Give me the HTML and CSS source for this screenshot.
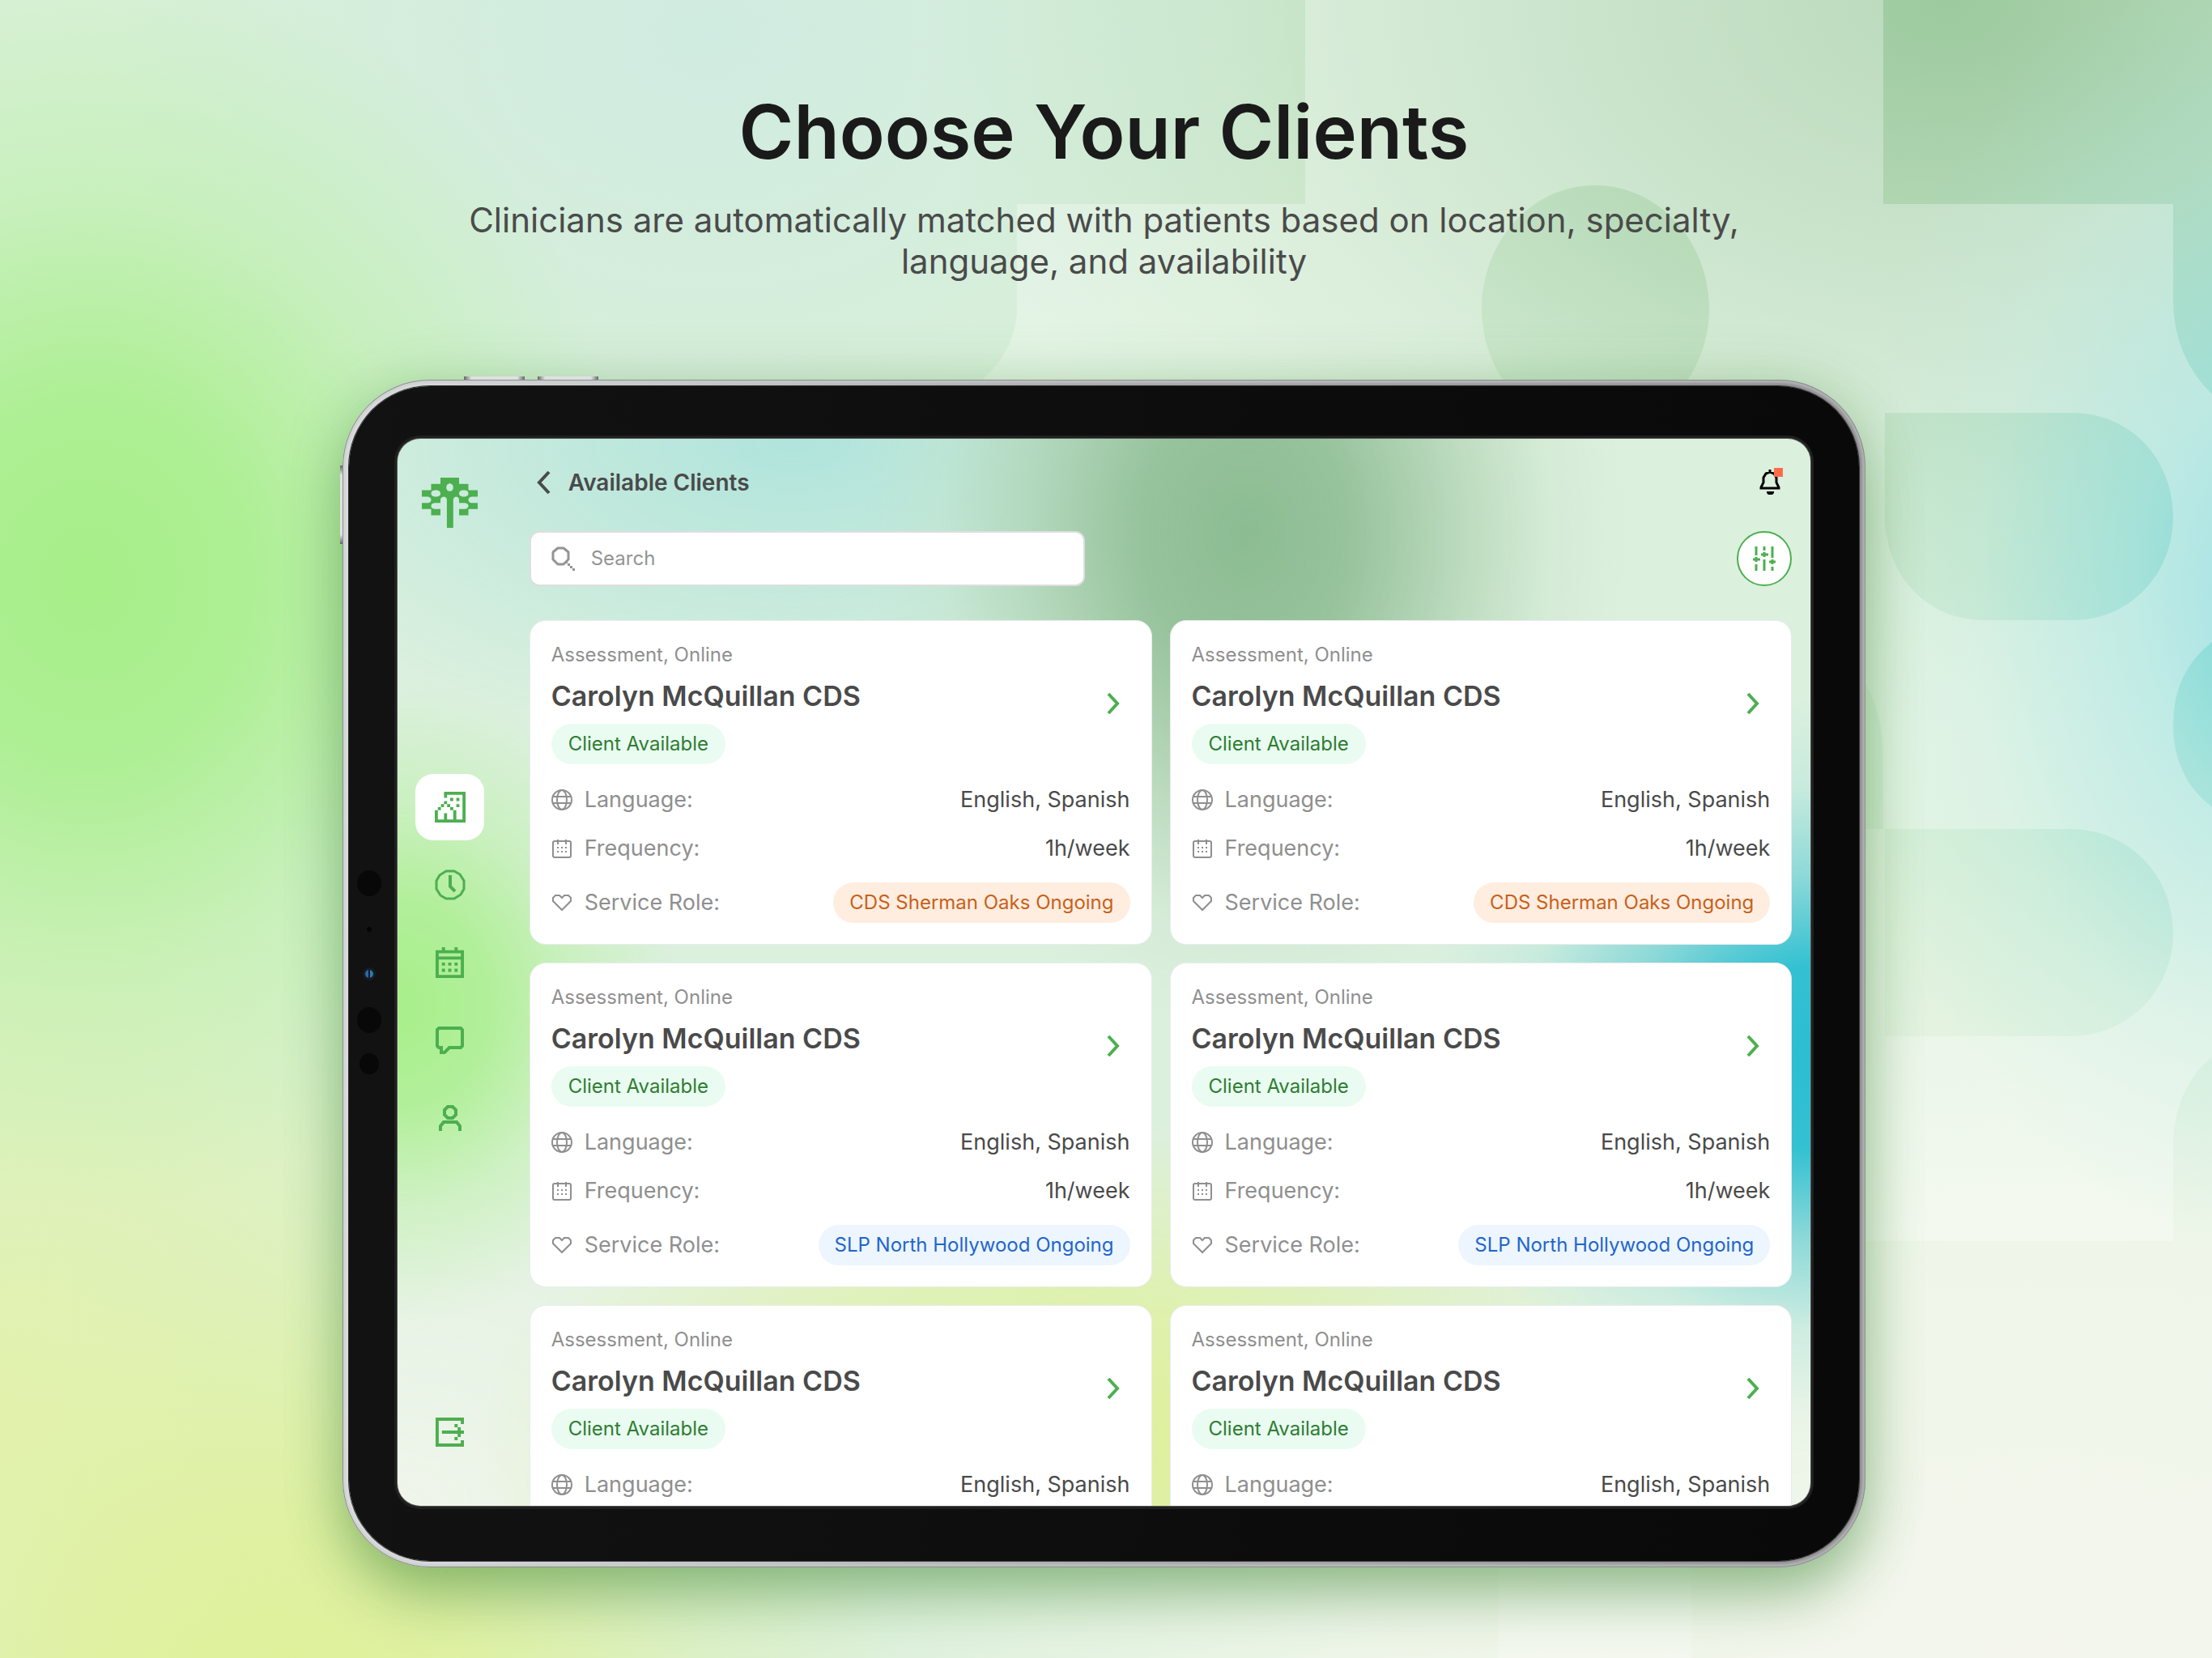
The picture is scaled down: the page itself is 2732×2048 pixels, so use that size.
FILE: index.html
```html
<!DOCTYPE html>
<html lang="en">
<head>
<meta charset="utf-8">
<meta name="viewport" content="width=device-width, initial-scale=1">
<title>Choose Your Clients</title>
<link rel="stylesheet" href="styles.css">
</head>
<body>
<svg width="0" height="0" class="sprite" aria-hidden="true">
  <symbol id="chevron" viewBox="0 0 16 28"><path d="M2 2L13 14L2 26" fill="none" stroke="currentColor" stroke-width="4"/></symbol>
  <symbol id="globe" viewBox="0 0 26 26"><g fill="none" stroke="currentColor" stroke-width="2"><circle cx="13" cy="13" r="12"/><ellipse cx="13" cy="13" rx="6" ry="12"/><path d="M2 9H24M2 17H24"/></g></symbol>
  <symbol id="calendar-small" viewBox="0 0 26 26"><rect x="2" y="4" width="22" height="20" rx="2" fill="none" stroke="currentColor" stroke-width="2"/><path d="M8 2V8M18 2V8" stroke="currentColor" stroke-width="2"/><path d="M7 11h2v2H7zM12 11h2v2h-2zM17 11h2v2h-2zM7 16h2v2H7zM12 16h2v2h-2zM17 16h2v2h-2z" fill="currentColor"/></symbol>
  <symbol id="heart" viewBox="0 0 26 26"><path d="M13 22L2 11V7L5 4H10L13 7L16 4H21L24 7V11Z" fill="none" stroke="currentColor" stroke-width="2"/></symbol>
</svg>

<div class="page">
  <svg class="pattern" viewBox="0 0 2732 2048" preserveAspectRatio="none" aria-hidden="true">
    <path fill="#fff" fill-opacity=".3" fill-rule="evenodd" d="M1612 0H2326V252H2684V370Q2684 440 2732 487V793Q2684 830 2684 895Q2684 960 2732 997V1306Q2684 1345 2684 1420V1533H1256V600Q1040 600 1150 508Q1256 460 1256 380V252H1612Z M1970 229C1890 229 1830 300 1830 381S1890 533 1970 533S2111 462 2111 381S2050 229 1970 229Z M2328 510H2560C2630 510 2684 566 2684 638S2630 766 2560 766H2450C2380 766 2328 710 2328 638Z M2328 1024H2556C2630 1024 2684 1082 2684 1152S2630 1280 2556 1280H2328Z M2250 800Q2326 830 2326 940V1024H2250Z"/>
    <path fill="#fff" fill-opacity=".25" d="M1851 1900H2089V2048H1851Z"/>
  </svg>

  <header class="hero">
    <h1 class="hero-title">Choose Your Clients</h1>
    <p class="hero-text">Clinicians are automatically matched with patients based on location, specialty, language, and availability</p>
  </header>

  <div class="device">
    <span class="key key-top-a"></span><span class="key key-top-b"></span><span class="key key-side"></span>
    <div class="bezel">
      <div class="sensors"><span class="dot"></span><span class="mic"></span><span class="lens"></span><span class="dot"></span><span class="dot dot-small"></span></div>
      <div class="screen">
        <nav class="sidebar" aria-label="Main">
          <a class="logo" href="#" aria-label="Home">
            <svg width="69" height="62" viewBox="0 0 192 184" preserveAspectRatio="none"><path fill="#4caf50" fill-rule="evenodd" d="M64 0H128V23H160V46H192V70H172Q160 72 160 81.500Q160 91 172 93H192V115H160V138H128V115H148Q160 113 160 104Q160 95 148 93H128V82Q128 72 118 70Q108 72 108 82V184H86V82Q86 72 76 70Q64 72 64 82V93H44Q32 95 32 104Q32 113 44 115H64V138H32V115H0V93H20Q32 91 32 81.500Q32 72 20 70H0V46H32V23H64Z M44 46Q32 48 32 58Q32 68 44 70H52Q64 68 64 58Q64 48 52 46Z M140 46Q128 48 128 58Q128 68 140 70H148Q160 68 160 58Q160 48 148 46Z M96 21Q84 24 84 36Q84 48 96 50Q108 48 108 36Q108 24 96 21Z"/></svg>
          </a>
          <div class="nav-items">
            <a class="nav-item nav-item-active" href="#" aria-label="Clients"><svg width="38" height="38" viewBox="0 0 10 10"><path fill="currentColor" d="M3 0h7v10H0V6h1v3h2V7h1v2h2V6h1v3h2V1H4v1H3zM5 2h1v1H5zM7 2h1v1H7zM7 4h1v1H7zM3 3h1v1H3zM2 4h1v1H2zM4 4h1v1H4zM1 5h1v1H1zM5 5h1v1H5z"/></svg></a>
            <a class="nav-item" href="#" aria-label="History"><svg width="38" height="38" viewBox="0 0 38 38"><g fill="none" stroke="currentColor"><path stroke-width="3" d="M14 2H24L31 6L36 14V24L32 31L24 36H14L7 32L2 24V14L6 7Z"/><path stroke-width="4" d="M19 7V21L25 27"/></g></svg></a>
            <a class="nav-item" href="#" aria-label="Calendar"><svg width="35" height="38" viewBox="0 0 9 10" preserveAspectRatio="none"><path fill="currentColor" fill-rule="evenodd" d="M0 1H2V0H3V1H6V0H7V1H9V10H0ZM1 2V3H8V2ZM1 4V9H8V4ZM2 5h1v1H2zM4 5h1v1H4zM6 5h1v1H6zM2 7h1v1H2zM4 7h1v1H4zM6 7h1v1H6z"/></svg></a>
            <a class="nav-item" href="#" aria-label="Messages"><svg width="35" height="35" viewBox="0 0 35 35"><path fill="none" stroke="currentColor" stroke-width="4" d="M4 2H31L33 4V24L31 26H17L11 32H7V26H4L2 24V4Z"/></svg></a>
            <a class="nav-item" href="#" aria-label="Profile"><svg width="28" height="32" viewBox="0 0 28 32"><path fill="none" stroke="currentColor" stroke-width="4" d="M11 2H17L21 6V12L17 16H11L7 12V6ZM2 32V26L6 21H22L26 26V32"/></svg></a>
          </div>
          <a class="logout" href="#" aria-label="Log out"><svg width="35" height="36" viewBox="0 0 9 9" preserveAspectRatio="none"><path fill="currentColor" d="M0 0H9V2H8V1H1V8H8V7H9V9H0ZM2 4H7V3H8V4H9V5H8V6H7V5H2ZM6 2h1v1H6zM6 6h1v1H6z"/></svg></a>
        </nav>

        <main class="main">
          <div class="topbar">
            <button class="back" type="button"><svg class="back-icon" width="18" height="30" viewBox="0 0 18 30"><path d="M16 2L4 15L16 28" fill="none" stroke="currentColor" stroke-width="4"/></svg>Available Clients</button>
            <button class="bell" type="button" aria-label="Notifications"><svg width="40" height="36" viewBox="0 0 40 36"><path fill="none" stroke="#000" stroke-width="3" d="M13 2V5M2 25V24L5 18V12L8 7L13 5L18 7L21 12V18L24 24V25Z"/><path fill="#000" d="M9 29H18V31L16 33H11L9 31Z"/><path fill="#ff6b4a" d="M18 0H29V11H18Z"/></svg></button>
          </div>
          <div class="tools">
            <label class="search"><svg width="29" height="30" viewBox="0 0 29 30" aria-hidden="true"><path fill="none" stroke="currentColor" stroke-width="3" stroke-linejoin="bevel" d="M8 2H15L21 7V16L15 22H8L2 16V7Z"/><path fill="currentColor" d="M17 18h3v3h-3zM20 21h3v3h-3zM23 24h3v3h-3zM26 27h3v3h-3z"/></svg><input type="search" placeholder="Search" aria-label="Search"></label>
            <button class="filter" type="button" aria-label="Filter"><svg width="28" height="30" viewBox="0 0 28 30"><path fill="none" stroke="currentColor" stroke-width="3" d="M4 0V11M4 13V19M4 22V30M0 16H9M14 0V5M14 7V13M14 16V30M10 10H19M24 0V14M24 16V22M24 25V30M20 19H28"/></svg></button>
          </div>

          <div class="cards">
            <article class="card">
              <div class="card-head"><div><p class="kind">Assessment, Online</p><h2 class="name">Carolyn McQuillan CDS</h2><span class="pill pill-green">Client Available</span></div><a class="open" href="#" aria-label="Open client"><svg width="16" height="28"><use href="#chevron"/></svg></a></div>
              <dl class="facts">
                <div class="fact"><dt><svg width="26" height="26"><use href="#globe"/></svg>Language:</dt><dd>English, Spanish</dd></div>
                <div class="fact"><dt><svg width="26" height="26"><use href="#calendar-small"/></svg>Frequency:</dt><dd>1h/week</dd></div>
                <div class="fact"><dt><svg width="26" height="26"><use href="#heart"/></svg>Service Role:</dt><dd class="pill pill-orange">CDS Sherman Oaks Ongoing</dd></div>
              </dl>
            </article>
            <article class="card">
              <div class="card-head"><div><p class="kind">Assessment, Online</p><h2 class="name">Carolyn McQuillan CDS</h2><span class="pill pill-green">Client Available</span></div><a class="open" href="#" aria-label="Open client"><svg width="16" height="28"><use href="#chevron"/></svg></a></div>
              <dl class="facts">
                <div class="fact"><dt><svg width="26" height="26"><use href="#globe"/></svg>Language:</dt><dd>English, Spanish</dd></div>
                <div class="fact"><dt><svg width="26" height="26"><use href="#calendar-small"/></svg>Frequency:</dt><dd>1h/week</dd></div>
                <div class="fact"><dt><svg width="26" height="26"><use href="#heart"/></svg>Service Role:</dt><dd class="pill pill-orange">CDS Sherman Oaks Ongoing</dd></div>
              </dl>
            </article>
            <article class="card">
              <div class="card-head"><div><p class="kind">Assessment, Online</p><h2 class="name">Carolyn McQuillan CDS</h2><span class="pill pill-green">Client Available</span></div><a class="open" href="#" aria-label="Open client"><svg width="16" height="28"><use href="#chevron"/></svg></a></div>
              <dl class="facts">
                <div class="fact"><dt><svg width="26" height="26"><use href="#globe"/></svg>Language:</dt><dd>English, Spanish</dd></div>
                <div class="fact"><dt><svg width="26" height="26"><use href="#calendar-small"/></svg>Frequency:</dt><dd>1h/week</dd></div>
                <div class="fact"><dt><svg width="26" height="26"><use href="#heart"/></svg>Service Role:</dt><dd class="pill pill-blue">SLP North Hollywood Ongoing</dd></div>
              </dl>
            </article>
            <article class="card">
              <div class="card-head"><div><p class="kind">Assessment, Online</p><h2 class="name">Carolyn McQuillan CDS</h2><span class="pill pill-green">Client Available</span></div><a class="open" href="#" aria-label="Open client"><svg width="16" height="28"><use href="#chevron"/></svg></a></div>
              <dl class="facts">
                <div class="fact"><dt><svg width="26" height="26"><use href="#globe"/></svg>Language:</dt><dd>English, Spanish</dd></div>
                <div class="fact"><dt><svg width="26" height="26"><use href="#calendar-small"/></svg>Frequency:</dt><dd>1h/week</dd></div>
                <div class="fact"><dt><svg width="26" height="26"><use href="#heart"/></svg>Service Role:</dt><dd class="pill pill-blue">SLP North Hollywood Ongoing</dd></div>
              </dl>
            </article>
            <article class="card">
              <div class="card-head"><div><p class="kind">Assessment, Online</p><h2 class="name">Carolyn McQuillan CDS</h2><span class="pill pill-green">Client Available</span></div><a class="open" href="#" aria-label="Open client"><svg width="16" height="28"><use href="#chevron"/></svg></a></div>
              <dl class="facts">
                <div class="fact"><dt><svg width="26" height="26"><use href="#globe"/></svg>Language:</dt><dd>English, Spanish</dd></div>
              </dl>
            </article>
            <article class="card">
              <div class="card-head"><div><p class="kind">Assessment, Online</p><h2 class="name">Carolyn McQuillan CDS</h2><span class="pill pill-green">Client Available</span></div><a class="open" href="#" aria-label="Open client"><svg width="16" height="28"><use href="#chevron"/></svg></a></div>
              <dl class="facts">
                <div class="fact"><dt><svg width="26" height="26"><use href="#globe"/></svg>Language:</dt><dd>English, Spanish</dd></div>
              </dl>
            </article>
          </div>
        </main>
      </div>
    </div>
  </div>
</div>
</body>
</html>
```

FILE: styles.css
```css
*, *::before, *::after { box-sizing: border-box; }
body { margin: 0; font-family: Inter, "Liberation Sans", sans-serif; color: #4a4a4a; }
h1, h2, p, dl, dd { margin: 0; }
button { border: 0; padding: 0; background: none; font: inherit; color: inherit; cursor: pointer; }
svg { display: block; flex: none; }
.sprite { position: absolute; }

.page {
  position: relative;
  min-height: 100vh;
  padding: 113px 5px 110px 0;
  overflow: hidden;
  background:
    radial-gradient(21% 40% at 104% 36%, #70d4da 0%, #8eddddaa 35%, #a8e4e044 70%, #a8e4e000 100%),
    radial-gradient(25% 38% at 4% 35%, #a6ef88 0%, #a8ef8bdd 30%, #b0f09666 62%, #b4f09c00 100%),
    radial-gradient(46% 44% at 88% 0%, #9dca9f 0%, #a6cfa9bb 35%, #b0d5b355 68%, #b8d8ba00 100%),
    radial-gradient(28% 42% at 13% 106%, #dff095 0%, #e0f19edd 35%, #e2f2a855 70%, #e4f3b000 100%),
    radial-gradient(24% 40% at 0% 84%, #e2f2b0 0%, #e2f2b400 100%),
    radial-gradient(28% 30% at 32% 2%, #d0ebe1 0%, #d4ecdf00 100%),
    radial-gradient(60% 50% at 92% 100%, #f4f6ed 0%, #f2f7ecdd 50%, #eef6ea00 100%),
    #d9f0d8;
}
.pattern { position: absolute; inset: 0; width: 100%; height: 100%; }

.hero { position: relative; text-align: center; }
.hero-title { font-size: 92px; line-height: 100px; font-weight: 600; color: #1a1a1a; }
.hero-text { max-width: 1640px; margin: 33px auto 0; font-size: 42px; line-height: 51px; }

.device {
  position: relative;
  width: 69%;
  margin: 121px auto 0;
  padding: 8px;
  border-radius: 108px;
  background: linear-gradient(90deg, #dcdedf, #a9aaac 50%, #8d8c8f);
  box-shadow: inset 0 0 0 1px #8b8f90, inset 0 0 3px 4px #c9cbcc99, 0 40px 70px -6px rgba(60, 130, 50, .42), 0 6px 70px rgba(80, 150, 70, .3);
}
.key { position: absolute; background: linear-gradient(90deg, #666, #dfe1e1 12%, #dfe1e1 88%, #666); }
.key-top-a, .key-top-b { top: -4px; width: 75px; height: 4px; }
.key-top-a { left: 150px; }
.key-top-b { left: 241px; }
.key-side { left: -3px; top: 106px; width: 3px; height: 97px; background: linear-gradient(#666, #dfe1e1 12%, #dfe1e1 88%, #666); }
.bezel {
  position: relative;
  padding: 65px 60px 68px;
  border-radius: 100px;
  background: linear-gradient(90deg, #121212, #090909);
  box-shadow: 0 0 0 1px #333;
}
.sensors { position: absolute; left: 10px; top: 598px; display: flex; flex-direction: column; align-items: center; }
.dot { width: 30px; height: 32px; border-radius: 50%; background: #080808; }
.mic { width: 6px; height: 6px; margin: 38px 0 44px; border-radius: 50%; background: #040404; }
.lens { width: 16px; height: 16px; margin-bottom: 33px; border: 3px solid #191b22; border-radius: 50%; background: linear-gradient(90deg, #2d6a9c 35%, #17133c 40% 60%, #1f7fae 65%); }
.dot-small { width: 24px; height: 26px; margin-top: 25px; }

.screen {
  display: flex;
  aspect-ratio: 1746 / 1318;
  overflow: hidden;
  border-radius: 28px;
  box-shadow: 0 0 0 1px #555, 0 0 0 4px #202020;
  background:
    radial-gradient(29% 34% at 101% 58%, #2bbdd2 0%, #34c1d2 26%, #6fd0d6bb 50%, #a0e0dc55 75%, #a5e2de00 100%),
    radial-gradient(27% 46% at 60% 9%, #8cbc92 0%, #93c098ee 28%, #a8ceab99 58%, #c0deC144 80%, #cfe6cf00 100%),
    radial-gradient(20% 30% at 0% 53%, #a8ef8b 0%, #abef8fdd 32%, #b6f09e77 62%, #c0f0ac00 100%),
    radial-gradient(42% 30% at 28% 0%, #b0e4dc 0%, #bbe7dccc 40%, #cdebdd00 100%),
    radial-gradient(42% 30% at 48% 94%, #deef9a 0%, #e0f1a4dd 40%, #e6f3bf00 100%),
    radial-gradient(50% 50% at 0% 100%, #eff5ea 0%, #e8f5e300 100%),
    radial-gradient(50% 30% at 100% 100%, #eff6ea 0%, #e8f5e300 100%),
    #dcf0de;
}

.sidebar { display: flex; flex-direction: column; align-items: center; flex: none; width: 130px; padding: 48px 0 73px; color: #4caf50; }
.nav-items { display: flex; flex-direction: column; gap: 14px; margin-top: 304px; }
.nav-item { display: grid; place-items: center; width: 85px; height: 82px; border-radius: 22px; color: inherit; }
.nav-item-active { background: #fff; }
.logout { margin-top: auto; color: inherit; }

.main { flex: 1; min-width: 0; height: 100%; padding: 24px 23px 0 33px; overflow: hidden; }
.topbar { display: flex; align-items: center; justify-content: space-between; height: 60px; }
.back { display: flex; align-items: center; gap: 22px; padding-left: 8px; font-size: 28px; line-height: 36px; font-weight: 600; }
.tools { display: flex; align-items: center; justify-content: space-between; margin: 30px 0 42px; }
.search { display: flex; align-items: center; gap: 20px; width: 44%; height: 68px; padding: 0 25px; border: 2px solid #dedede; border-radius: 12px; background: #fff; color: #949494; }
.search input { flex: 1; min-width: 0; padding: 0; border: 0; outline: 0; background: none; font: inherit; font-size: 24px; line-height: 32px; color: #4a4a4a; }
.search input::placeholder { color: #949494; opacity: 1; }
.filter { display: grid; place-items: center; width: 68px; height: 68px; border: 2px solid #4caf50; border-radius: 50%; background: #fff; color: #4caf50; }

.cards { display: grid; grid-template-columns: 1fr 1fr; gap: 22px; }
.card { padding: 26px; border: 1px solid #e9ebee; border-radius: 20px; background: #fff; }
.card-head { display: flex; align-items: center; justify-content: space-between; padding-right: 13px; }
.kind { font-size: 24px; line-height: 32px; color: #8f8f8f; }
.name { margin: 14px 0 13px; font-size: 34px; line-height: 42px; font-weight: 600; }
.open { color: #4caf50; }
.pill { display: inline-block; padding: 0 21px; border-radius: 25px; font-size: 24px; line-height: 50px; vertical-align: top; }
.pill-green { background: #eafcf1; color: #2e7d32; }
.facts { display: flex; flex-direction: column; gap: 24px; margin-top: 26px; }
.fact { display: flex; align-items: center; justify-content: space-between; font-size: 27px; line-height: 36px; }
.fact .pill { padding: 0 20px; font-size: 24px; line-height: 50px; }
.pill-orange { background: #ffede0; color: #c8611a; }
.pill-blue { background: #edf5fe; color: #1f66cc; }
.fact dt { display: flex; align-items: center; gap: 15px; color: #8f8f8f; }
```
